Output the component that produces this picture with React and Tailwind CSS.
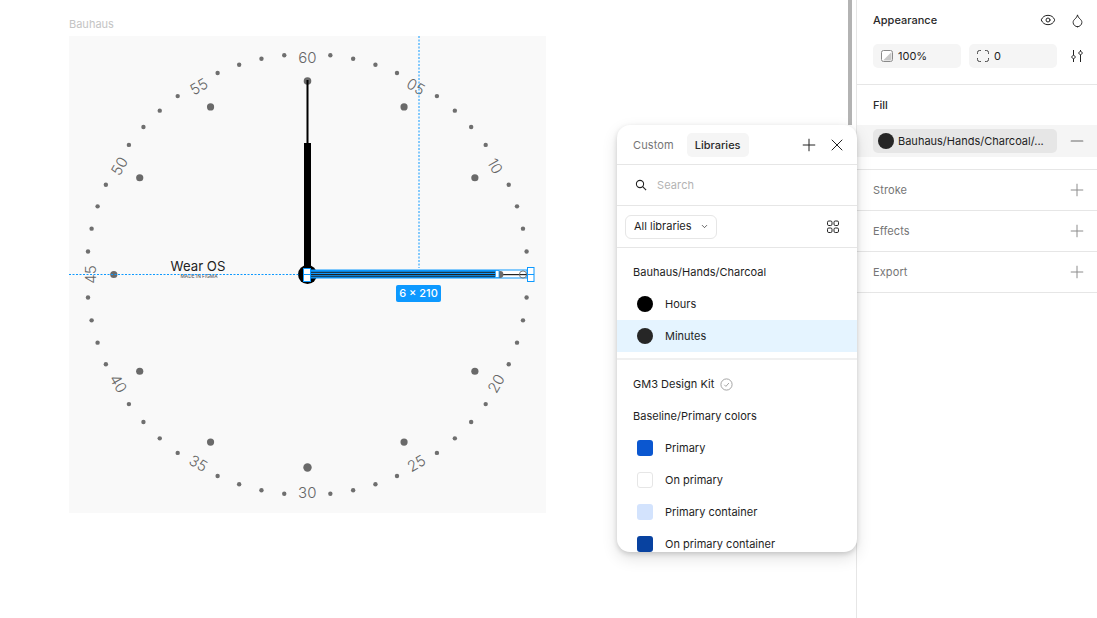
import { Plus, X, Eye, Droplet, Minus, ChevronDown } from 'lucide-react'

const CX = 238.3
const CY = 238.5

function polar(r, deg) {
  const a = (deg * Math.PI) / 180
  return [CX + r * Math.sin(a), CY - r * Math.cos(a)]
}

const numbers = [
  { label: '60', deg: 0, rot: 0 },
  { label: '05', deg: 30, rot: 30 },
  { label: '10', deg: 60, rot: 60 },
  { label: '20', deg: 120, rot: -60 },
  { label: '25', deg: 150, rot: -30 },
  { label: '30', deg: 180, rot: 0 },
  { label: '35', deg: 210, rot: 30 },
  { label: '40', deg: 240, rot: 60 },
  { label: '45', deg: 270, rot: -90 },
  { label: '50', deg: 300, rot: -60 },
  { label: '55', deg: 330, rot: -30 },
]

const minuteDots = Array.from({ length: 60 }, (_, i) => i * 6).filter((d) => d % 30 !== 0)
const hourDots = [30, 60, 120, 150, 210, 240, 300, 330, 270]

function Dial() {
  return (
    <svg width="477" height="477" viewBox="0 0 477 477" className="block overflow-visible">
      {minuteDots.map((d) => {
        const [x, y] = polar(220.5, d)
        return <circle key={d} cx={x} cy={y} r="2.2" fill="#6f6f6f" />
      })}
      {hourDots.map((d) => {
        const [x, y] = polar(193.5, d)
        return <circle key={d} cx={x} cy={y} r="3.6" fill="#6a6a6a" />
      })}
      <circle cx="238.5" cy="45" r="3.8" fill="#6a6a6a" />
      <circle cx="238.5" cy="431.5" r="4.2" fill="#6a6a6a" />
      {numbers.map((n) => {
        const [x, y] = polar(217.5, n.deg)
        return (
          <text
            key={n.label}
            x={x}
            y={y + 0.5}
            textAnchor="middle"
            dominantBaseline="central"
            fontSize="15"
            fill="#666666"
            className="font-['Inter',sans-serif] font-light"
            transform={`rotate(${n.rot} ${x} ${y})`}
          >
            {n.label}
          </text>
        )
      })}
      <text x="129" y="235" textAnchor="middle" fontSize="13.2" fill="#222" className="font-['Inter',sans-serif]">Wear OS</text>
      <text x="130" y="241.5" textAnchor="middle" fontSize="4.8" fill="#444" className="font-['Inter',sans-serif]">MADE IN FIGMA</text>

      {/* hour hand */}
      <rect x="237.5" y="44" width="2" height="64" fill="#000" />
      <rect x="235" y="107" width="7" height="132" fill="#000" />
      <circle cx="238.5" cy="238.5" r="9.5" fill="#000" />

      {/* guides */}
      <line x1="0" y1="238.5" x2="230" y2="238.5" stroke="#0d99ff" strokeDasharray="2 1.5" />
      <line x1="350" y1="0" x2="350" y2="232" stroke="#0d99ff" strokeDasharray="2 1.5" />

      {/* selected minute hand */}
      <rect x="241" y="234" width="217" height="8" fill="#fff" stroke="#0d99ff" />
      <rect x="241" y="234" width="185" height="8" fill="#0d99ff" />
      <rect x="241" y="235.8" width="185" height="1" fill="#222" />
      <rect x="241" y="238" width="217" height="1.2" fill="#222" />
      <rect x="241" y="240.3" width="185" height="0.8" fill="#222" />
      <circle cx="431" cy="238.5" r="3.4" fill="#6a6a6a" />
      <circle cx="454" cy="238.5" r="3.6" fill="none" stroke="#777" />
      <rect x="426.5" y="234.5" width="3.5" height="7" fill="#fff" stroke="#0d99ff" strokeWidth="0.8" />
      <rect x="458.5" y="231.5" width="6.5" height="14" fill="#fff" stroke="#0d99ff" />
      <line x1="458.5" y1="238.5" x2="465" y2="238.5" stroke="#0d99ff" />
      <rect x="234.5" y="232.5" width="7" height="13" fill="#fff" stroke="#0d99ff" />
      <line x1="234.5" y1="238.5" x2="241.5" y2="238.5" stroke="#0d99ff" />
    </svg>
  )
}

function OpacityIcon() {
  return (
    <svg width="12" height="12" viewBox="0 0 12 12" fill="none">
      <rect x="0.5" y="0.5" width="11" height="11" rx="2" fill="#fff" stroke="#8a8a8a" />
      <path d="M10.5 2v8.5H2z" fill="#c9c9c9" />
    </svg>
  )
}

function CornerIcon() {
  return (
    <svg width="12" height="12" viewBox="0 0 12 12" fill="none" stroke="#444" strokeLinecap="round">
      <path d="M.5 3.5v-1a2 2 0 0 1 2-2h1" />
      <path d="M8.5.5h1a2 2 0 0 1 2 2v1" />
      <path d="M11.5 8.5v1a2 2 0 0 1-2 2h-1" />
      <path d="M3.5 11.5h-1a2 2 0 0 1-2-2v-1" />
    </svg>
  )
}

function TuneIcon() {
  return (
    <svg width="14" height="14" viewBox="0 0 14 14" fill="none" stroke="#222">
      <path d="M3.5 1v5M3.5 10v3M10.5 1v1M10.5 6v7" />
      <path d="M3.5 6l2 2-2 2-2-2z" />
      <path d="M10.5 2l2 2-2 2-2-2z" />
    </svg>
  )
}

function GridIcon() {
  return (
    <svg width="14" height="14" viewBox="0 0 14 14" fill="none" stroke="#222">
      <rect x="1.5" y="1" width="4.5" height="4.5" rx="1.3" />
      <rect x="8" y="1" width="4.5" height="4.5" rx="1.3" />
      <rect x="1.5" y="8" width="4.5" height="4.5" rx="1.3" />
      <rect x="8" y="8" width="4.5" height="4.5" rx="1.3" />
    </svg>
  )
}

function SearchIcon() {
  return (
    <svg width="12" height="12" viewBox="0 0 12 12" fill="none" stroke="#222" strokeWidth="1.1">
      <circle cx="5" cy="5" r="3.6" />
      <path d="M7.7 7.7l3.4 3.4" />
    </svg>
  )
}

function CheckCircle() {
  return (
    <svg width="13" height="13" viewBox="0 0 13 13" fill="none" stroke="#9a9a9a" strokeWidth="0.9">
      <circle cx="6.5" cy="6.5" r="5.6" />
      <path d="M4.3 6.8l1.6 1.6 3-3.4" />
    </svg>
  )
}

function StyleRow({ name, swatch, active }) {
  return (
    <div className={`flex h-8 shrink-0 items-center gap-3 pl-5 text-[11px] text-[#1e1e1e] ${active ? 'bg-[#e5f4ff]' : ''}`}>
      {swatch}
      <span>{name}</span>
    </div>
  )
}

function Heading({ children }) {
  return <div className="flex h-8 shrink-0 items-center gap-[6px] pl-4 text-[11px] tracking-[0.002em] text-[#1e1e1e]">{children}</div>
}

function LibraryPopover() {
  return (
    <div className="absolute left-[617px] top-[125px] z-10 flex h-[427px] w-[240px] flex-col overflow-hidden rounded-[13px] bg-white shadow-[0_2px_5px_rgba(0,0,0,0.15),0_6px_16px_rgba(0,0,0,0.12)]">
      <div className="flex h-10 shrink-0 items-center gap-[5px] border-b border-[#e6e6e6] pl-2 pr-[10px] pt-px">
        <div className="flex h-6 items-center rounded-[5px] px-2 text-[11px] tracking-[0.01em] text-[#757575]">Custom</div>
        <div className="flex h-6 items-center rounded-[5px] bg-[#f5f5f5] px-2 text-[11px] font-medium text-[#2a2a2a]">Libraries</div>
        <Plus className="ml-auto mr-[3px] text-[#222]" size={20} strokeWidth={1.2} />
        <X className="text-[#222]" size={20} strokeWidth={1.2} />
      </div>
      <div className="flex h-[41px] shrink-0 items-center gap-[10px] border-b border-[#e6e6e6] pl-[18px] text-[11px] tracking-[0.01em] text-[#b3b3b3]">
        <SearchIcon />
        <span>Search</span>
      </div>
      <div className="flex h-[42px] shrink-0 items-center justify-between border-b border-[#e6e6e6] pl-2 pr-[17px]">
        <div className="flex h-6 w-[92px] items-center gap-2 rounded-[6px] border border-[#e6e6e6] pl-2 text-[11px] text-[#1e1e1e]">
          All libraries
          <ChevronDown size={9} strokeWidth={1.8} />
        </div>
        <GridIcon />
      </div>
      <div className="flex h-2 shrink-0" />
      <Heading>Bauhaus/Hands/Charcoal</Heading>
      <StyleRow name="Hours" swatch={<div className="size-4 rounded-full bg-black" />} />
      <StyleRow name="Minutes" active swatch={<div className="size-4 rounded-full bg-[#262626]" />} />
      <div className="mt-[6px] h-[2px] shrink-0 bg-[#f0f0f0]" />
      <div className="flex h-2 shrink-0" />
      <Heading>
        GM3 Design Kit
        <CheckCircle />
      </Heading>
      <Heading>Baseline/Primary colors</Heading>
      <StyleRow name="Primary" swatch={<div className="size-4 rounded-[3px] bg-[#0b57d0]" />} />
      <StyleRow name="On primary" swatch={<div className="size-4 rounded-[3px] border border-[#e6e6e6] bg-white" />} />
      <StyleRow name="Primary container" swatch={<div className="size-4 rounded-[3px] bg-[#d3e3fd]" />} />
      <StyleRow name="On primary container" swatch={<div className="size-4 rounded-[3px] bg-[#0842a0]" />} />
    </div>
  )
}

function AddSection({ title }) {
  return (
    <div className="flex h-[41px] items-center justify-between border-b border-[#e6e6e6] pl-4 pr-[10px] text-[11px] tracking-[0.01em] text-[#757575]">
      {title}
      <Plus className="text-[#8c8c8c]" size={20} strokeWidth={1.2} />
    </div>
  )
}

function RightPanel() {
  return (
    <aside className="w-[241px] shrink-0 border-l border-[#e6e6e6] bg-white">
      <div className="border-b border-[#e6e6e6] pb-4">
        <div className="flex h-10 items-center justify-between pl-4 pr-3 text-[11px] font-medium text-[#2a2a2a]">
          Appearance
          <div className="flex items-center gap-[14px]">
            <Eye className="text-[#222]" size={16} strokeWidth={1.5} />
            <Droplet className="text-[#222]" size={15} strokeWidth={1.5} />
          </div>
        </div>
        <div className="mt-1 flex items-center gap-2 pl-4">
          <div className="flex h-6 w-[88px] items-center gap-[5px] rounded-[5px] bg-[#f5f5f5] pl-2 text-[11px] text-[#1e1e1e]">
            <OpacityIcon />
            100%
          </div>
          <div className="flex h-6 w-[88px] items-center gap-[5px] rounded-[5px] bg-[#f5f5f5] pl-2 text-[11px] text-[#1e1e1e]">
            <CornerIcon />
            0
          </div>
          <div className="ml-[5px]">
            <TuneIcon />
          </div>
        </div>
      </div>
      <div className="border-b border-[#e6e6e6] pb-3">
        <div className="flex h-10 items-center pl-4 text-[11px] font-medium text-[#2a2a2a]">Fill</div>
        <div className="flex h-8 items-center justify-between bg-[#f5f5f5] pl-4 pr-[10px]">
          <div className="flex h-6 w-[184px] items-center gap-1 rounded-[5px] bg-[#e6e6e6] pl-[5px] text-[11px] text-[#1e1e1e]">
            <div className="size-4 rounded-full bg-[#262626]" />
            Bauhaus/Hands/Charcoal/...
          </div>
          <Minus className="text-[#6b6b6b]" size={20} strokeWidth={1.3} />
        </div>
      </div>
      <AddSection title="Stroke" />
      <AddSection title="Effects" />
      <AddSection title="Export" />
    </aside>
  )
}

export default function App() {
  return (
    <div className="relative flex h-screen w-full overflow-hidden bg-white font-['Inter',sans-serif]">
      <main className="relative min-w-0 flex-1">
        <div className="absolute left-[69px] top-[16px]">
          <div className="flex h-5 items-start text-[11px] text-[#c4c4c4]">Bauhaus</div>
          <div className="relative size-[477px] bg-[#f9f9f9]">
            <Dial />
            <div className="absolute left-[327px] top-[249px] flex h-[17px] w-[45px] items-center justify-center rounded-[2px] bg-[#0d99ff] text-[11px] font-medium text-white">
              6 × 210
            </div>
          </div>
        </div>
        <div className="absolute right-[4px] top-0 h-[125px] w-1 bg-[#b3b3b3]" />
      </main>
      <RightPanel />
      <LibraryPopover />
    </div>
  )
}
